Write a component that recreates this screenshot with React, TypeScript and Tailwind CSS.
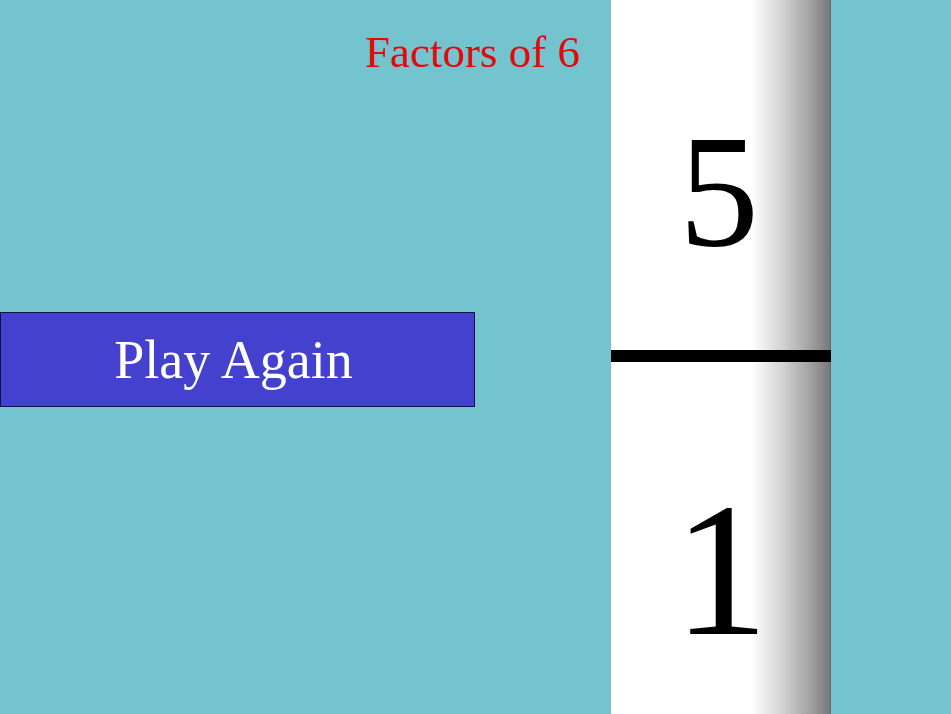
export default function App() {
  return (
    <div className="flex h-[714px] w-full overflow-hidden bg-[#73c4cf] font-['Liberation_Serif','Times_New_Roman',serif]">
      {/* Left side: title + button */}
      <div className="flex w-[611px] shrink-0 flex-col">
        <h1 className="pt-[30px] pr-[31px] text-right text-[45px] font-normal leading-none text-[#e4080a]">
          Factors of 6
        </h1>
        <button className="mt-[237px] flex h-[95px] w-[475px] items-center justify-center border border-[#10104a] bg-[#4541cf] pr-[8px] text-[54px] leading-none text-white">
          Play Again
        </button>
      </div>

      {/* Number tile column */}
      <div className="flex w-[220px] shrink-0 flex-col bg-[linear-gradient(to_right,#ffffff_0%,#ffffff_64%,#d2d2d2_78%,#a4a4a4_90%,#7c7c7c_99%,#6a6a6a_100%)] text-black">
        <div className="h-[350px] pt-[111px] pr-[4px] text-center text-[160px] leading-none">5</div>
        <div className="h-[12px] bg-black" />
        <div className="pt-[113px] text-center text-[190px] leading-none">1</div>
      </div>

      <div className="flex-1" />
    </div>
  );
}
